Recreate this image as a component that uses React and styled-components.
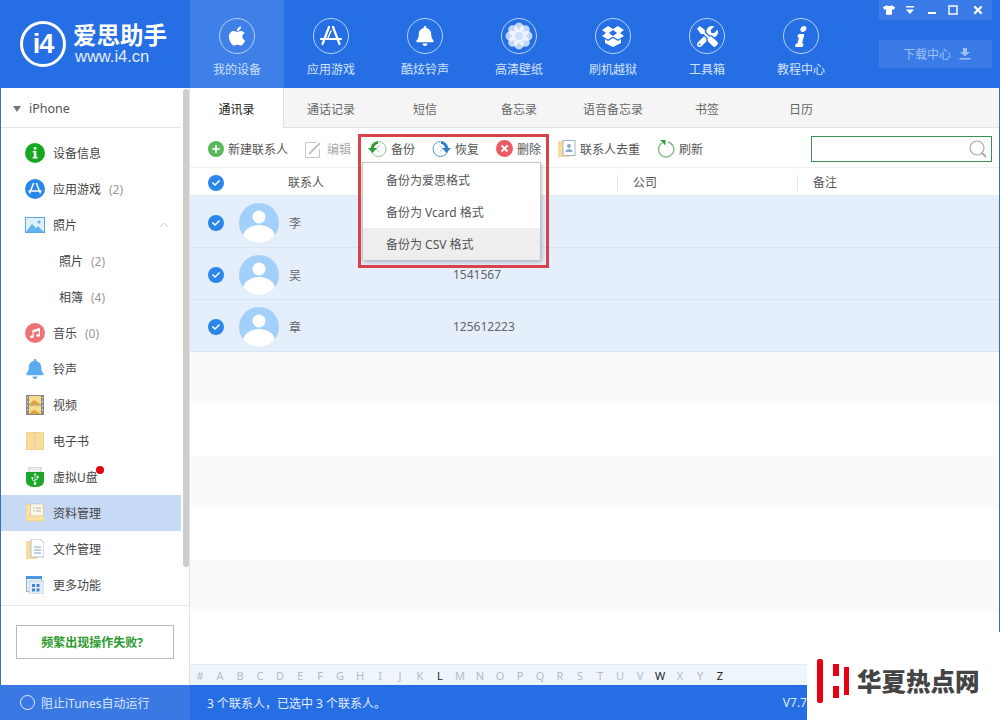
import React from 'react'
import styled, { createGlobalStyle } from 'styled-components'
import { FaApple, FaBell, FaTools, FaInfo, FaTshirt, FaUsb, FaMusic, FaCheck, FaPlus, FaTimes } from 'react-icons/fa'

const GlobalStyle = createGlobalStyle`
  html, body { margin: 0; padding: 0; background: #fff; }
  body { font-family: "Noto Sans", "Noto Sans CJK SC", sans-serif; font-size: 12px; color: #444; }
  * { box-sizing: border-box; }
`

const Page = styled.div`
  position: relative;
  width: 1000px;
  height: 720px;
  display: flex;
  flex-direction: column;
  overflow: hidden;
`
const Header = styled.header`
  height: 88px;
  display: flex;
  background: #266ee4;
  flex-shrink: 0;
`
const Logo = styled.div`
  width: 190px;
  display: flex;
  align-items: center;
  padding-left: 20px;
  gap: 7px;
  color: #fff;
`
const LogoMark = styled.div`
  width: 46px;
  height: 46px;
  border: 3px solid #fff;
  border-radius: 50%;
  display: flex;
  align-items: center;
  justify-content: center;
  font: bold 27px/1 "Liberation Sans", sans-serif;
  letter-spacing: -1px;
`
const LogoText = styled.div`
  display: flex;
  flex-direction: column;
  margin-top: -2px;
`
const LogoName = styled.div`
  font-family: "Noto Sans CJK SC", sans-serif;
  font-size: 23.5px;
  font-weight: 700;
  line-height: 26px;
  white-space: nowrap;
`
const LogoUrl = styled.div`
  font-family: "Liberation Sans", sans-serif;
  font-size: 16.5px;
  line-height: 18px;
  margin-left: 2px;
  color: #e4edfc;
`
const Nav = styled.nav`
  display: flex;
`
const NavItem = styled.div`
  width: 94px;
  display: flex;
  flex-direction: column;
  align-items: center;
  padding-top: 18px;
  background: ${p => (p.$active ? '#3e7fe8' : 'transparent')};
  color: #d3e2fa;
`
const NavCircle = styled.div`
  width: 36px;
  height: 36px;
  border: 1px solid #b9d2f7;
  border-radius: 50%;
  display: flex;
  align-items: center;
  justify-content: center;
  color: #fff;
  font-size: 19px;
`
const NavLabel = styled.div`
  margin-top: 7px;
  line-height: 18px;
`
const HeaderRight = styled.div`
  flex: 1;
  display: flex;
  flex-direction: column;
  align-items: flex-end;
  padding-right: 8px;
`
const WinButtons = styled.div`
  width: 113px;
  height: 20px;
  display: flex;
  align-items: center;
  background: #3a7be7;
  color: #fff;
`
const WinButton = styled.div`
  width: ${p => p.$w || 21}px;
  height: 20px;
  display: flex;
  align-items: center;
  justify-content: center;
  font-size: 11px;
`
const DownloadButton = styled.div`
  width: 113px;
  height: 28px;
  margin-top: 20px;
  display: flex;
  align-items: center;
  justify-content: center;
  gap: 8px;
  padding-left: 3px;
  background: #3a7be7;
  color: #9fc0f3;
`
const Body = styled.div`
  flex: 1;
  display: flex;
  min-height: 0;
`
const Sidebar = styled.aside`
  width: 190px;
  display: flex;
  flex-direction: column;
  border-left: 1px solid #3a6fc0;
  border-right: 1px solid #e2e2e2;
  flex-shrink: 0;
`
const SideTop = styled.div`
  flex: 1;
  display: flex;
  min-height: 0;
`
const SideScroll = styled.div`
  width: 180px;
`
const ScrollTrack = styled.div`
  width: 8px;
  padding: 1px 0 0 2px;
`
const ScrollThumb = styled.div`
  width: 6px;
  height: 478px;
  border-radius: 3px;
  background: #cdcdcd;
`
const DeviceRow = styled.div`
  height: 40px;
  display: flex;
  align-items: center;
  padding: 2px 0 0 12px;
  gap: 8px;
  border-bottom: 1px solid #e6e6e6;
  font-size: 12.5px;
  color: #555;
`
const Caret = styled.span`
  width: 0;
  height: 0;
  border-left: 4px solid transparent;
  border-right: 4px solid transparent;
  border-top: 6px solid #777;
`
const SideList = styled.div`
  padding-top: 7px;
`
const SideItem = styled.div`
  position: relative;
  height: 36px;
  display: flex;
  align-items: center;
  padding-left: ${p => (p.$sub ? 58 : 23)}px;
  background: ${p => (p.$active ? '#c8d9f6' : 'transparent')};
`
const SideIcon = styled.span`
  width: 22px;
  height: 22px;
  margin-right: 7px;
  display: flex;
  align-items: center;
  justify-content: center;
  flex-shrink: 0;
`
const Count = styled.span`
  margin-left: 8px;
  color: #999;
`
const Chevron = styled.svg`
  position: absolute;
  right: 12px;
  top: 15px;
`
const RedDot = styled.span`
  position: absolute;
  left: 95px;
  top: 7px;
  width: 8px;
  height: 8px;
  border-radius: 50%;
  background: #e60012;
`
const SideBottom = styled.div`
  height: 80px;
  border-top: 1px solid #e6e6e6;
  padding: 19px 15px 0;
`
const HelpButton = styled.div`
  height: 34px;
  border: 1px solid #bbb;
  display: flex;
  align-items: center;
  justify-content: center;
  padding-right: 6px;
  color: #2b9a2f;
  font-weight: 700;
`
const Main = styled.main`
  flex: 1;
  display: flex;
  flex-direction: column;
  min-width: 0;
  border-right: 1px solid #3a6fc0;
`
const Tabs = styled.div`
  height: 40px;
  display: flex;
  background: #f5f5f5;
  border-bottom: 1px solid #e2e2e2;
`
const Tab = styled.div`
  width: 94px;
  display: flex;
  align-items: center;
  justify-content: center;
  padding-top: 2px;
  color: ${p => (p.$active ? '#222' : '#666')};
  background: ${p => (p.$active ? '#fff' : 'transparent')};
  margin-bottom: ${p => (p.$active ? '-1px' : 0)};
  border-right: ${p => (p.$active ? '1px solid #e2e2e2' : 'none')};
`
const Toolbar = styled.div`
  height: 40px;
  display: flex;
  align-items: center;
  gap: 17px;
  padding: 2px 7px 0 18px;
  border-bottom: 1px solid #f0f0f0;
`
const ToolButton = styled.div`
  display: flex;
  align-items: center;
  gap: 4px;
  color: ${p => (p.$disabled ? '#aaa' : '#555')};
  white-space: nowrap;
`
const SearchBox = styled.div`
  width: 181px;
  height: 26px;
  margin-left: auto;
  border: 1px solid #3c9150;
  display: flex;
  align-items: center;
  justify-content: flex-end;
  padding-right: 3px;
`
const TableHead = styled.div`
  height: 28px;
  padding-top: 2px;
  display: grid;
  grid-template-columns: 98px 149px 180px 180px 1fr;
  align-items: center;
  border-bottom: 1px solid #e4ecf5;
  color: #555;
`
const HeadCell = styled.div`
  padding-left: ${p => (p.$first ? 0 : 15)}px;
  border-left: ${p => (p.$line ? '1px solid #e6e6e6' : 'none')};
  line-height: 16px;
  min-height: 16px;
`
const CheckCell = styled.div`
  padding-left: 18px;
  display: flex;
`
const CheckDot = styled.span`
  width: 16px;
  height: 16px;
  border-radius: 50%;
  background: #2a86e8;
  color: #fff;
  display: flex;
  align-items: center;
  justify-content: center;
  font-size: 8px;
`
const Rows = styled.div`
  flex: 1;
  display: flex;
  flex-direction: column;
`
const Row = styled.div`
  height: 52px;
  flex-shrink: 0;
  padding-top: 2px;
  display: grid;
  grid-template-columns: 49px 50px 164px 1fr;
  align-items: center;
  background: ${p => (p.$selected ? '#e5effc' : p.$odd ? '#fafafa' : '#fff')};
  border-bottom: ${p => (p.$selected ? '1px solid #d8e4f2' : 'none')};
  color: #666;
`
const AvatarCell = styled.div`
  display: flex;
`
const AlphaBar = styled.div`
  height: 21px;
  display: flex;
  background: #eef5fd;
  align-items: center;
  border-top: 1px solid #e2ebf6;
`
const Letter = styled.span`
  width: 20px;
  text-align: center;
  font-size: 11px;
  color: ${p => (p.$on ? '#222' : '#b4bbc4')};
`
const StatusRow = styled.div`
  height: 35px;
  display: flex;
  flex-shrink: 0;
`
const StatusLeft = styled.div`
  width: 190px;
  display: flex;
  align-items: center;
  gap: 6px;
  padding-left: 20px;
  background: #3a78e4;
  color: #dbe7fb;
`
const Ring = styled.span`
  width: 15px;
  height: 15px;
  border: 1px solid #e6effc;
  border-radius: 50%;
`
const StatusMain = styled.div`
  flex: 1;
  display: flex;
  align-items: center;
  justify-content: space-between;
  padding: 0 0 0 17px;
  background: #266ee4;
  color: #e2ecfb;
`
const Version = styled.span`
  margin-right: 193px;
`
const Menu = styled.div`
  position: absolute;
  left: 362px;
  top: 162px;
  width: 179px;
  height: 98px;
  padding-top: 1px;
  background: #fff;
  border: 1px solid #c4c4c4;
  box-shadow: 1px 2px 4px rgba(0, 0, 0, 0.25);
`
const MenuItem = styled.div`
  height: 32px;
  display: flex;
  align-items: center;
  padding-left: 23px;
  color: #555;
  background: ${p => (p.$hover ? '#eeeeee' : 'transparent')};
`
const RedFrame = styled.div`
  position: absolute;
  left: 358px;
  top: 134px;
  width: 191px;
  height: 134px;
  border: 3px solid #d8434a;
  pointer-events: none;
`
const Watermark = styled.div`
  position: absolute;
  right: 0;
  bottom: 0;
  width: 193px;
  height: 88px;
  background: #fff;
  display: flex;
  align-items: center;
  padding: 10px 0 0 10px;
  gap: 8px;
`
const WatermarkText = styled.span`
  font-family: "Noto Sans CJK SC", sans-serif;
  font-size: 24.5px;
  font-weight: 900;
  color: #444;
  line-height: 1;
  white-space: nowrap;
`

const AppStoreGlyph = ({ size = 22, color = '#fff' }) => (
  <svg width={size} height={size} viewBox="0 0 24 24" fill="none" stroke={color} strokeWidth="2.2" strokeLinecap="round">
    <path d="M14 3 20.5 20" />
    <path d="M10 3 3.5 20" />
    <path d="M2 15h20" />
    <path d="M12 7 8.5 15" strokeWidth="1.4" />
  </svg>
)

const FlowerGlyph = () => (
  <svg width="28" height="28" viewBox="0 0 28 28" fill="#fff">
    {[0, 45, 90, 135, 180, 225, 270, 315].map(a => (
      <ellipse key={a} cx="14" cy="6.5" rx="5" ry="6" opacity="0.72" transform={`rotate(${a} 14 14)`} />
    ))}
    <circle cx="14" cy="14" r="4" fill="#cfe0fb" />
  </svg>
)

const BoxGlyph = () => (
  <svg width="24" height="24" viewBox="0 0 24 24" fill="#fff">
    <path d="M7 2 12 5 17 2 23 6 19 9 23 12 17 15.5 12 12.5 7 15.5 1 12 5 9 1 6z" />
    <path d="M12 6 8 9l4 3 4-3z" fill="#266ee4" />
    <path d="M4 15 7 17 12 14 17 17 20 15v4l-8 4-8-4z" />
  </svg>
)

const navItems = [
  { label: '我的设备', icon: <FaApple size={22} />, active: true },
  { label: '应用游戏', icon: <AppStoreGlyph size={24} /> },
  { label: '酷炫铃声', icon: <FaBell size={20} /> },
  { label: '高清壁纸', icon: <FlowerGlyph /> },
  { label: '刷机越狱', icon: <BoxGlyph /> },
  { label: '工具箱', icon: <FaTools size={21} /> },
  { label: '教程中心', icon: <FaInfo size={21} style={{ transform: 'skewX(-14deg)' }} /> },
]

const tabs = ['通讯录', '通话记录', '短信', '备忘录', '语音备忘录', '书签', '日历']

const Circle = ({ color, children }) => (
  <svg width="20" height="20" viewBox="0 0 20 20">
    <circle cx="10" cy="10" r="10" fill={color} />
    {children}
  </svg>
)

const sideIcons = {
  info: (
    <Circle color="#16a81e">
      <rect x="8.8" y="4" width="2.6" height="2.6" fill="#fff" />
      <path d="M7.8 8h3.6v6h1.2v1.4H7.6V14h1.2V9.4h-1z" fill="#fff" />
    </Circle>
  ),
  app: (
    <Circle color="#2a86e8">
      <path d="M11.3 4 15.5 14.5M8.7 4 4.5 14.5M3.5 12h13" stroke="#fff" strokeWidth="1.5" fill="none" />
    </Circle>
  ),
  photo: (
    <svg width="20" height="16" viewBox="0 0 20 16">
      <rect x="0.5" y="0.5" width="19" height="15" fill="#dff0fc" stroke="#5aa7dc" />
      <path d="M1 15 7 7l4 4 2-2 6 6z" fill="#62b4ee" />
      <circle cx="14" cy="5" r="1.6" fill="#62b4ee" />
    </svg>
  ),
  music: (
    <Circle color="#ee7377">
      <FaMusic x="5" y="5" size={10} color="#fff" />
    </Circle>
  ),
  bell: <FaBell size={20} color="#5aabf0" />,
  video: (
    <svg width="18" height="20" viewBox="0 0 18 20">
      <rect width="18" height="20" fill="#8a8a8a" />
      <path d="M1 2h1v1.5H1zM1 6h1v1.5H1zM1 10h1v1.5H1zM1 14h1v1.5H1zM16 2h1v1.5h-1zM16 6h1v1.5h-1zM16 10h1v1.5h-1zM16 14h1v1.5h-1z" fill="#e5e5e5" />
      <rect x="3" y="1" width="12" height="8.5" fill="#f7dc8e" />
      <rect x="3" y="10.5" width="12" height="8.5" fill="#f7dc8e" />
      <path d="M3 9.5 8 5l7 4.5zM3 19l5-4.5 7 4.5z" fill="#e0a33c" />
    </svg>
  ),
  book: (
    <svg width="18" height="18" viewBox="0 0 18 18">
      <path d="M0 0h8.5v18H0zM9.5 0H18v18H9.5z" fill="#f9dc9c" stroke="#e6bf75" strokeWidth="0.6" />
    </svg>
  ),
  usb: (
    <svg width="18" height="20" viewBox="0 0 18 20">
      <rect x="3" y="0" width="12" height="6" fill="#eee" stroke="#aaa" strokeWidth="0.6" />
      <path d="M0 5h18v9c0 4-4 6-9 6s-9-2-9-6z" fill="#1da72a" />
      <g transform="rotate(-90 9 12)">
        <FaUsb x="3" y="6" size={12} color="#fff" />
      </g>
    </svg>
  ),
  data: (
    <svg width="18" height="20" viewBox="0 0 18 20">
      <path d="M0 1h5v1h13v16H0z" fill="#fbe29f" stroke="#ecc976" strokeWidth="0.6" />
      <rect x="4.5" y="1" width="13" height="12" fill="#fdf6e2" stroke="#bbb" strokeWidth="0.6" />
      <path d="M7 5h1.5M7 8h1.5M10 5h5M10 8h5" stroke="#9fb4c8" />
    </svg>
  ),
  file: (
    <svg width="18" height="20" viewBox="0 0 18 20">
      <rect x="0" y="2" width="11" height="18" fill="#f9dc9c" />
      <path d="M5 0h9l4 4v14H5z" fill="#fff" stroke="#9fb4c8" strokeWidth="0.8" />
      <path d="M8 8h7M8 11h7M8 14h7" stroke="#7ea3c6" />
    </svg>
  ),
  more: (
    <svg width="18" height="18" viewBox="0 0 18 18">
      <rect x="0.5" y="0.5" width="15" height="15" fill="#eaf2fb" stroke="#8fb1d5" />
      <rect x="0" y="0" width="16" height="3" fill="#4d97dc" />
      <rect x="3" y="5" width="15" height="13" fill="#e4edf7" stroke="#b5c4d4" strokeWidth="0.6" />
      <path d="M6 8h3v3H6zM10.5 8h3v3h-3zM6 12.5h3v3H6zM10.5 12.5h3v3h-3z" fill="#3f87d0" />
    </svg>
  ),
}

const sideItems = [
  { label: '设备信息', icon: 'info' },
  { label: '应用游戏', icon: 'app', count: '(2)' },
  { label: '照片', icon: 'photo', open: true },
  { label: '照片', sub: true, count: '(2)' },
  { label: '相簿', sub: true, count: '(4)' },
  { label: '音乐', icon: 'music', count: '(0)' },
  { label: '铃声', icon: 'bell' },
  { label: '视频', icon: 'video' },
  { label: '电子书', icon: 'book' },
  { label: '虚拟U盘', icon: 'usb', dot: true },
  { label: '资料管理', icon: 'data', active: true },
  { label: '文件管理', icon: 'file' },
  { label: '更多功能', icon: 'more' },
]

const contacts = [
  { name: '李', phone: '' },
  { name: '吴', phone: '1541567' },
  { name: '章', phone: '125612223' },
]

const letters = '#ABCDEFGHIJKLMNOPQRSTUVWXYZ'.split('')

const Avatar = () => (
  <svg width="40" height="40" viewBox="0 0 40 40">
    <defs>
      <clipPath id="avatar-clip">
        <circle cx="20" cy="20" r="20" />
      </clipPath>
    </defs>
    <circle cx="20" cy="20" r="20" fill="#a3d0fb" />
    <g clipPath="url(#avatar-clip)" fill="#fff">
      <circle cx="20" cy="14" r="6.5" />
      <ellipse cx="20" cy="34" rx="16" ry="12" />
    </g>
  </svg>
)

const Check = () => (
  <CheckDot>
    <FaCheck />
  </CheckDot>
)

const EditIcon = () => (
  <svg width="18" height="18" viewBox="0 0 18 18" fill="none" stroke="#c4c4c4">
    <path d="M14.5 9v8.5H.5V2.5h11" />
    <path d="M4 14 15 3" strokeWidth="2" />
  </svg>
)
const BackupIcon = () => (
  <svg width="19" height="18" viewBox="0 0 19 18" fill="none">
    <circle cx="10.5" cy="9" r="7.5" stroke="#8fbf98" />
    <path d="M11.5 5 8.5 9l3 3.5" stroke="#b5c7b9" />
    <path d="M10 1.5C6 1.5 3.5 4 3 8H0l4.5 5L9 8H6c.4-2.5 2-4 4-4z" fill="#2f9b3a" />
  </svg>
)
const RestoreIcon = () => (
  <svg width="19" height="18" viewBox="0 0 19 18" fill="none">
    <circle cx="8.5" cy="9" r="7.5" stroke="#5a97d6" />
    <path d="M7.5 5l3 4-3 3.5" stroke="#b3c7dc" />
    <path d="M9 1.5c4 0 6.5 2.5 7 6.500h3l-4.500 5L10 8h3c-.4-2.500-2-4-4-4z" fill="#2f7fd1" />
  </svg>
)
const DeleteIcon = () => (
  <svg width="17" height="17" viewBox="0 0 17 17">
    <circle cx="8.5" cy="8.5" r="8.5" fill="#ee5a62" />
    <path d="m5.5 5.500 6 6m0-6-6 6" stroke="#fff" strokeWidth="2" />
  </svg>
)
const DedupeIcon = () => (
  <svg width="18" height="18" viewBox="0 0 18 18">
    <rect x="0" y="1" width="12" height="16" fill="#f9dc9c" />
    <rect x="5" y="0.5" width="12" height="15" fill="#fff" stroke="#9fb4c8" />
    <circle cx="11" cy="6" r="2" fill="#86aad0" />
    <path d="M7.500 12c0-4 7-4 7 0z" fill="#86aad0" />
  </svg>
)
const RefreshIcon = () => (
  <svg width="18" height="18" viewBox="0 0 18 18" fill="none">
    <path d="M5 3a7.600 7.600 0 1 0 6-1" stroke="#7fbf85" strokeWidth="1.400" />
    <path d="M3 0h5.500v5.500z" fill="#2f9b3a" />
  </svg>
)
const SearchIcon = () => (
  <svg width="20" height="20" viewBox="0 0 20 20" fill="none" stroke="#a9a9a9">
    <circle cx="9" cy="9" r="7" strokeWidth="1.2" />
    <path d="m14 14 4 4" strokeWidth="1.8" />
  </svg>
)
const DownloadIcon = () => (
  <svg width="12" height="12" viewBox="0 0 12 12" fill="#9fc0f3">
    <path d="M4 0h4v4h3L6 8.500 1 4h3zM0.500 10h11v1.500H.5z" />
  </svg>
)
const MenuGlyph = () => (
  <svg width="10" height="10" viewBox="0 0 10 10" fill="#fff">
    <path d="M1 1h8v1.600H1zM1 4.500h8L5 9z" />
  </svg>
)

export default function App() {
  return (
    <Page>
      <GlobalStyle />
      <Header>
        <Logo>
          <LogoMark>i4</LogoMark>
          <LogoText>
            <LogoName>爱思助手</LogoName>
            <LogoUrl>www.i4.cn</LogoUrl>
          </LogoText>
        </Logo>
        <Nav>
          {navItems.map(n => (
            <NavItem key={n.label} $active={n.active}>
              <NavCircle>{n.icon}</NavCircle>
              <NavLabel>{n.label}</NavLabel>
            </NavItem>
          ))}
        </Nav>
        <HeaderRight>
          <WinButtons>
            <WinButton $w={20}><FaTshirt size={12} /></WinButton>
            <WinButton $w={22}><MenuGlyph /></WinButton>
            <WinButton $w={21}>
              <svg width="10" height="10" viewBox="0 0 10 10" fill="#fff"><path d="M1 7h8v2H1z" /></svg>
            </WinButton>
            <WinButton $w={21}>
              <svg width="10" height="10" viewBox="0 0 10 10" fill="none" stroke="#fff" strokeWidth="1.4"><path d="M1 1h8v8H1z" /></svg>
            </WinButton>
            <WinButton $w={29}><FaTimes size={12} /></WinButton>
          </WinButtons>
          <DownloadButton>
            下载中心
            <DownloadIcon />
          </DownloadButton>
        </HeaderRight>
      </Header>

      <Body>
        <Sidebar>
          <SideTop>
            <SideScroll>
              <DeviceRow>
                <Caret />
                iPhone
              </DeviceRow>
              <SideList>
                {sideItems.map((s, i) => (
                  <SideItem key={i} $sub={s.sub} $active={s.active}>
                    {!s.sub && <SideIcon>{sideIcons[s.icon]}</SideIcon>}
                    {s.label}
                    {s.count && <Count>{s.count}</Count>}
                    {s.open && (
                      <Chevron width="10" height="6" viewBox="0 0 10 6" fill="none" stroke="#d5d5d5">
                        <path d="m1 5 4-4 4 4" />
                      </Chevron>
                    )}
                    {s.dot && <RedDot />}
                  </SideItem>
                ))}
              </SideList>
            </SideScroll>
            <ScrollTrack>
              <ScrollThumb />
            </ScrollTrack>
          </SideTop>
          <SideBottom>
            <HelpButton>频繁出现操作失败?</HelpButton>
          </SideBottom>
        </Sidebar>

        <Main>
          <Tabs>
            {tabs.map((t, i) => (
              <Tab key={t} $active={i === 0}>{t}</Tab>
            ))}
          </Tabs>
          <Toolbar>
            <ToolButton>
              <svg width="16" height="16" viewBox="0 0 16 16">
                <circle cx="8" cy="8" r="8" fill="#5cb85c" />
                <FaPlus x="3.5" y="3.5" size={9} color="#fff" />
              </svg>
              新建联系人
            </ToolButton>
            <ToolButton $disabled><EditIcon />编辑</ToolButton>
            <ToolButton><BackupIcon />备份</ToolButton>
            <ToolButton><RestoreIcon />恢复</ToolButton>
            <ToolButton><DeleteIcon />删除</ToolButton>
            <ToolButton><DedupeIcon />联系人去重</ToolButton>
            <ToolButton><RefreshIcon />刷新</ToolButton>
            <SearchBox><SearchIcon /></SearchBox>
          </Toolbar>
          <TableHead>
            <CheckCell><Check /></CheckCell>
            <HeadCell $first>联系人</HeadCell>
            <HeadCell $line />
            <HeadCell $line>公司</HeadCell>
            <HeadCell $line>备注</HeadCell>
          </TableHead>
          <Rows>
            {contacts.map(c => (
              <Row key={c.name} $selected>
                <CheckCell><Check /></CheckCell>
                <AvatarCell><Avatar /></AvatarCell>
                <span>{c.name}</span>
                <span>{c.phone}</span>
              </Row>
            ))}
            {[0, 1, 2, 3, 4, 5].map(i => (
              <Row key={i} $odd={i % 2 === 0} />
            ))}
          </Rows>
          <AlphaBar>
            {letters.map(l => (
              <Letter key={l} $on={l === 'L' || l === 'W' || l === 'Z'}>{l}</Letter>
            ))}
          </AlphaBar>
        </Main>
      </Body>

      <StatusRow>
        <StatusLeft>
          <Ring />
          阻止iTunes自动运行
        </StatusLeft>
        <StatusMain>
          <span>3 个联系人，已选中 3 个联系人。</span>
          <Version>V7.7</Version>
        </StatusMain>
      </StatusRow>

      <Menu>
        <MenuItem>备份为爱思格式</MenuItem>
        <MenuItem>备份为 Vcard 格式</MenuItem>
        <MenuItem $hover>备份为 CSV 格式</MenuItem>
      </Menu>
      <RedFrame />

      <Watermark>
        <svg width="32" height="44" viewBox="0 0 32 44" fill="#e60012">
          <rect x="0" y="0" width="6" height="44" rx="2" />
          <rect x="16" y="5" width="6" height="12" />
          <rect x="16" y="27" width="6" height="12" />
          <rect x="27" y="8" width="5" height="28" />
        </svg>
        <WatermarkText>华夏热点网</WatermarkText>
      </Watermark>
    </Page>
  )
}
